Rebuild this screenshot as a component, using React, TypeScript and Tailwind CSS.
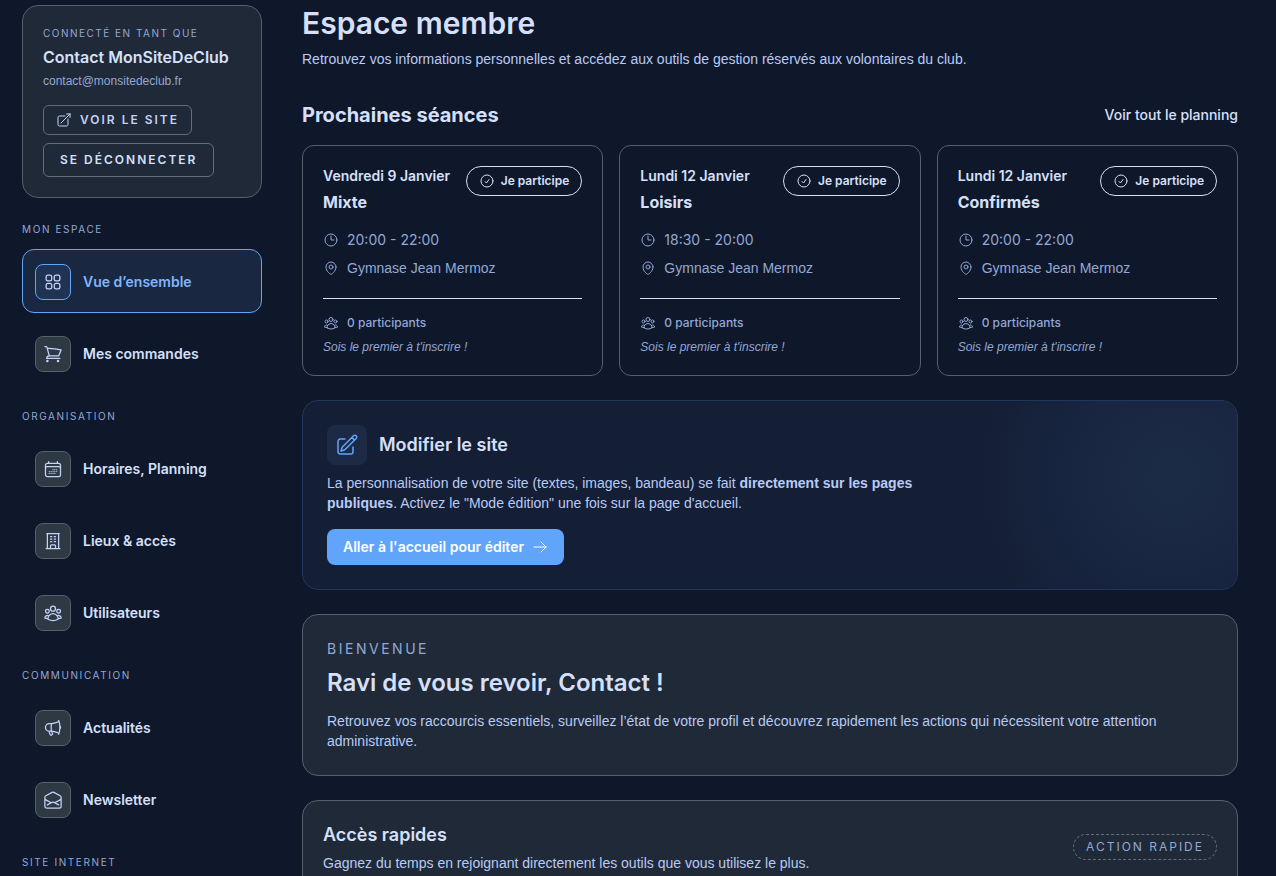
import React from 'react';
import type { IconType } from 'react-icons';
import {
  HiOutlineArrowRight,
  HiOutlineArrowTopRightOnSquare,
  HiOutlineBuildingOffice,
  HiOutlineCalendarDays,
  HiOutlineCheckCircle,
  HiOutlineClock,
  HiOutlineEnvelopeOpen,
  HiOutlineMapPin,
  HiOutlineMegaphone,
  HiOutlinePencilSquare,
  HiOutlineShoppingCart,
  HiOutlineSquares2X2,
  HiOutlineUserGroup,
} from 'react-icons/hi2';

type NavItem = { label: string; icon: IconType; active?: boolean };
type NavGroup = { title: string; items: NavItem[] };
type Session = { day: string; name: string; time: string; place: string };

const navGroups: NavGroup[] = [
  {
    title: 'Mon espace',
    items: [
      { label: 'Vue d’ensemble', icon: HiOutlineSquares2X2, active: true },
      { label: 'Mes commandes', icon: HiOutlineShoppingCart },
    ],
  },
  {
    title: 'Organisation',
    items: [
      { label: 'Horaires, Planning', icon: HiOutlineCalendarDays },
      { label: 'Lieux & accès', icon: HiOutlineBuildingOffice },
      { label: 'Utilisateurs', icon: HiOutlineUserGroup },
    ],
  },
  {
    title: 'Communication',
    items: [
      { label: 'Actualités', icon: HiOutlineMegaphone },
      { label: 'Newsletter', icon: HiOutlineEnvelopeOpen },
    ],
  },
  { title: 'Site internet', items: [] },
];

const sessions: Session[] = [
  { day: 'Vendredi 9 Janvier', name: 'Mixte', time: '20:00 - 22:00', place: 'Gymnase Jean Mermoz' },
  { day: 'Lundi 12 Janvier', name: 'Loisirs', time: '18:30 - 20:00', place: 'Gymnase Jean Mermoz' },
  { day: 'Lundi 12 Janvier', name: 'Confirmés', time: '20:00 - 22:00', place: 'Gymnase Jean Mermoz' },
];

// running text is set in the narrower grotesque, headings and controls in Inter
const bodyFont = "font-['Liberation_Sans',Arial,sans-serif]";

const NavLink: React.FC<{ item: NavItem }> = ({ item }) => {
  const Icon = item.icon;
  return (
    <a
      href="#"
      className={`flex items-center gap-3 rounded-xl border px-3 pt-3.5 pb-3 text-sm font-semibold ${
        item.active ? 'border-[#60a5fa] bg-[#1a2740] text-[#82b6f8]' : 'border-transparent'
      }`}
    >
      <span
        className={`flex size-9 shrink-0 items-center justify-center rounded-lg border text-[#c3d3fb] ${
          item.active ? 'border-[#60a5fa] bg-[#213353]' : 'border-[#566069] bg-[#2f3944]'
        }`}
      >
        <Icon className="size-5" />
      </span>
      {item.label}
    </a>
  );
};

function Sidebar() {
  return (
    <aside className="flex w-60 shrink-0 flex-col gap-6">
      <div className="rounded-2xl border border-[#565f6b] bg-[#1f2937] p-5">
        <p className="text-[10px] leading-[15px] tracking-[0.15em] text-[#93a8d4] uppercase">Connecté en tant que</p>
        <p className="mt-1 text-base font-semibold">Contact MonSiteDeClub</p>
        <p className={`mt-1 text-xs text-[#93a8d4] ${bodyFont}`}>contact@monsitedeclub.fr</p>
        <div className="mt-4 flex flex-col items-start gap-2">
          <a
            href="#"
            className="flex items-center gap-2 rounded-md border border-[#656d78] px-3 py-1.5 text-xs font-semibold tracking-[2px] text-[#c3d3fb] uppercase"
          >
            <HiOutlineArrowTopRightOnSquare className="size-4" />
            Voir le site
          </a>
          <button
            type="button"
            className="rounded-md border border-[#656d78] px-4 py-2 text-xs font-semibold tracking-[2px] uppercase"
          >
            Se déconnecter
          </button>
        </div>
      </div>

      {navGroups.map((group) => (
        <nav key={group.title} aria-label={group.title}>
          <p className="text-[10px] leading-[15px] tracking-[0.16em] text-[#93a8d4] uppercase">{group.title}</p>
          <div className="mt-3 flex flex-col gap-2">
            {group.items.map((item) => (
              <NavLink key={item.label} item={item} />
            ))}
          </div>
        </nav>
      ))}
    </aside>
  );
}

const SessionCard: React.FC<{ session: Session }> = ({ session }) => (
  <article className="rounded-xl border border-[#565f6b] p-5">
    <div className="flex items-start justify-between">
      <div>
        <p className="text-sm font-semibold">{session.day}</p>
        <h3 className="mt-1 text-base font-bold">{session.name}</h3>
      </div>
      <button
        type="button"
        className="flex shrink-0 items-center gap-1.5 rounded-full border border-[#d6e0fb] px-3 py-1.5 text-xs font-semibold"
      >
        <HiOutlineCheckCircle className="size-4" />
        Je participe
      </button>
    </div>
    <div className="mt-4 flex flex-col gap-2 text-sm text-[#93a8d4]">
      <p className="flex items-center gap-2">
        <HiOutlineClock className="size-4" />
        {session.time}
      </p>
      <p className={`flex items-center gap-2 ${bodyFont}`}>
        <HiOutlineMapPin className="size-4" />
        {session.place}
      </p>
    </div>
    <div className="mt-5 border-t border-[#d6e0fb] pt-4 text-xs text-[#93a8d4]">
      <p className="flex items-center gap-2 font-medium">
        <HiOutlineUserGroup className="size-4" />0 participants
      </p>
      <p className={`mt-2 italic ${bodyFont}`}>Sois le premier à t'inscrire !</p>
    </div>
  </article>
);

function EditSiteCard() {
  return (
    <section className="relative overflow-hidden rounded-2xl border border-[#22365a] bg-[#141e35] p-6">
      <div className="absolute inset-y-0 right-0 w-64 bg-[radial-gradient(circle_at_75%_40%,#1c2b45_0%,#182540_50%,transparent_90%)]" />
      <div className="relative">
        <div className="flex items-center gap-3">
          <span className="flex size-10 items-center justify-center rounded-lg bg-[#1c2a46] text-[#60a5fa]">
            <HiOutlinePencilSquare className="size-6" />
          </span>
          <h2 className="text-lg font-semibold">Modifier le site</h2>
        </div>
        <p className={`mt-2 max-w-[640px] text-sm text-[#b9cbf5] ${bodyFont}`}>
          La personnalisation de votre site (textes, images, bandeau) se fait{' '}
          <strong className="font-bold">directement sur les pages publiques</strong>. Activez le "Mode édition" une fois
          sur la page d'accueil.
        </p>
        <a
          href="#"
          className="mt-4 inline-flex items-center gap-2 rounded-lg bg-[#60a5fa] px-4 py-2 align-top text-sm font-semibold text-white"
        >
          Aller à l'accueil pour éditer
          <HiOutlineArrowRight className="size-4" />
        </a>
      </div>
    </section>
  );
}

export default function App() {
  return (
    <div className="flex min-h-screen items-start gap-10 bg-[#0f172a] pt-[5px] pr-[38px] pb-6 pl-[22px] font-['Inter','Liberation_Sans',sans-serif] text-[#d6e0fb]">
      <Sidebar />
      <main className="flex min-w-0 flex-1 flex-col gap-6">
        <header className="mb-2">
          <h1 className="text-3xl font-semibold">Espace membre</h1>
          <p className={`mt-2 text-sm text-[#b9cbf5] ${bodyFont}`}>
            Retrouvez vos informations personnelles et accédez aux outils de gestion réservés aux volontaires du club.
          </p>
        </header>

        <section>
          <div className="flex items-center justify-between">
            <h2 className="text-xl font-bold">Prochaines séances</h2>
            <a href="#" className="text-sm font-medium">
              Voir tout le planning
            </a>
          </div>
          <div className="mt-4 grid grid-cols-3 gap-4">
            {sessions.map((session) => (
              <SessionCard key={session.name} session={session} />
            ))}
          </div>
        </section>

        <EditSiteCard />

        <section className="rounded-2xl border border-[#565f6b] bg-[#1f2937] p-6">
          <p className="text-sm tracking-[0.18em] text-[#93a8d4] uppercase">Bienvenue</p>
          <h2 className="mt-2 text-2xl font-semibold">Ravi de vous revoir, Contact !</h2>
          <p className={`mt-3 text-sm text-[#b9cbf5] ${bodyFont}`}>
            Retrouvez vos raccourcis essentiels, surveillez l’état de votre profil et découvrez rapidement les actions
            qui nécessitent votre attention administrative.
          </p>
        </section>

        <section className="flex items-center justify-between rounded-2xl border border-[#565f6b] bg-[#1f2937] p-5">
          <div>
            <h2 className="text-lg font-semibold">Accès rapides</h2>
            <p className={`mt-1 text-sm text-[#b9cbf5] ${bodyFont}`}>
              Gagnez du temps en rejoignant directement les outils que vous utilisez le plus.
            </p>
          </div>
          <span className="rounded-full border border-dashed border-[#656d78] px-3 py-1 text-xs tracking-[2px] text-[#93a8d4] uppercase">
            Action rapide
          </span>
        </section>
      </main>
    </div>
  );
}
